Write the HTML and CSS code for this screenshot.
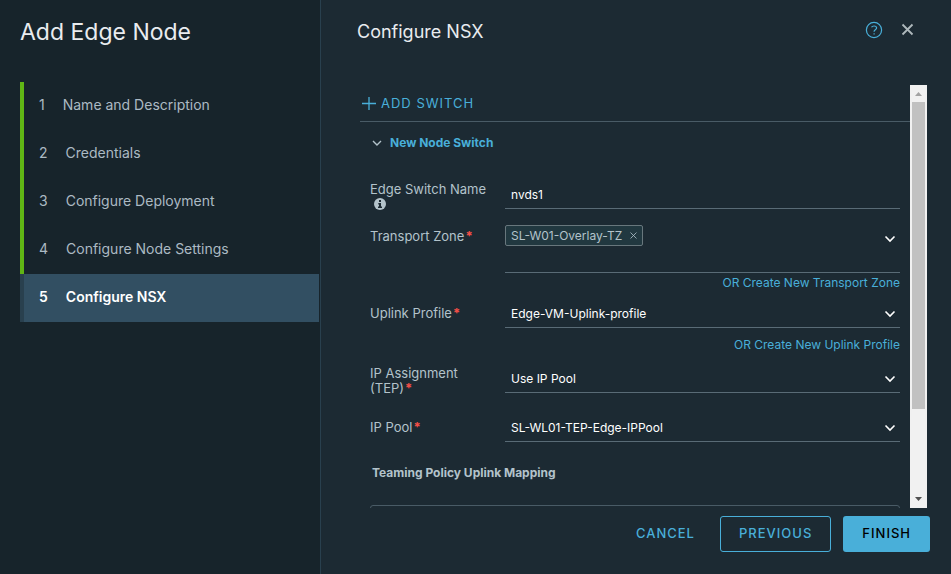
FILE: index.html
```html
<!DOCTYPE html>
<html lang="en">
<head>
    <meta charset="UTF-8">
    <meta name="viewport" content="width=device-width, initial-scale=1.0">
    <title>Add Edge Node</title>
    <link rel="stylesheet" href="styles.css">
</head>
<body>
    <div class="wizard">
        <aside class="sidebar">
            <h1 class="wizard-title">Add Edge Node</h1>
            <nav class="steps">
                <button type="button" class="step done"><span class="step-num">1</span>Name and Description</button>
                <button type="button" class="step done"><span class="step-num">2</span>Credentials</button>
                <button type="button" class="step done"><span class="step-num">3</span>Configure Deployment</button>
                <button type="button" class="step done"><span class="step-num">4</span>Configure Node Settings</button>
                <button type="button" class="step active" aria-current="step"><span class="step-num">5</span>Configure NSX</button>
            </nav>
        </aside>

        <main class="page">
            <header class="page-header">
                <h2 class="page-title">Configure NSX</h2>
                <button type="button" class="icon-button help" aria-label="Help">
                    <svg width="18" height="18" viewBox="0 0 18 18" fill="none" stroke="currentColor" stroke-width="1.2">
                        <circle cx="9" cy="9" r="7.6"/>
                        <path d="M6.5 6.3C7 5.4 7.9 5 9 5c1.5 0 2.6.8 2.6 2 0 1.7-2.5 1.7-2.5 3.5v.3"/>
                        <path d="M9.1 12.2v1.4"/>
                    </svg>
                </button>
                <button type="button" class="icon-button close" aria-label="Close">
                    <svg width="14" height="14" viewBox="0 0 14 14" fill="none" stroke="currentColor" stroke-width="1.8">
                        <path d="M1.5 1.5l10 10M11.5 1.5l-10 10"/>
                    </svg>
                </button>
            </header>

            <div class="scroll-area">
                <form class="content" id="nsxForm">
                    <div class="toolbar">
                        <button type="button" class="add-switch">
                            <svg width="14" height="14" viewBox="0 0 14 14" fill="none" stroke="currentColor" stroke-width="1.3">
                                <path d="M0 6.5h14M7 0v13"/>
                            </svg>
                            ADD SWITCH
                        </button>
                    </div>

                    <button type="button" class="switch-toggle" aria-expanded="true">
                        <svg width="10" height="6" viewBox="0 0 10 6" fill="none" stroke="#b3c3cb" stroke-width="1.4">
                            <path d="M1 1l4 4 4-4"/>
                        </svg>
                        New Node Switch
                    </button>

                    <div class="field tall">
                        <label class="label two-line" for="switchName">Edge Switch Name
                            <svg class="info" width="12" height="12" viewBox="0 0 12 12">
                                <circle cx="6" cy="6" r="6" fill="#b3c3cb"/>
                                <path d="M5 2h2v2H5zM4.3 5H7v3.5h1V10H4V8.5h1v-2h-.7z" fill="#1c2a33"/>
                            </svg>
                        </label>
                        <input class="control" id="switchName" type="text" value="nvds1">
                    </div>

                    <div class="field">
                        <label class="label" for="transportZone">Transport Zone<span class="required">*</span></label>
                        <div class="control multi">
                            <span class="chip">SL-W01-Overlay-TZ
                                <button type="button" class="chip-remove" aria-label="Remove SL-W01-Overlay-TZ">
                                    <svg width="7" height="7" viewBox="0 0 7 7" fill="none" stroke="currentColor" stroke-width=".8">
                                        <path d="M.5.5l6 6M6.5.5l-6 6"/>
                                    </svg>
                                </button>
                            </span>
                            <input class="multi-input" id="transportZone" type="text">
                            <button type="button" class="multi-open" aria-label="Show transport zones">
                                <svg width="12" height="8" viewBox="0 0 12 8" fill="none" stroke="#fff" stroke-width="1.6">
                                    <path d="M1.5 1.5L6 6l4.5-4.5"/>
                                </svg>
                            </button>
                        </div>
                    </div>
                    <a class="create-link" href="#">OR Create New Transport Zone</a>

                    <div class="field">
                        <label class="label" for="uplinkProfile">Uplink Profile<span class="required">*</span></label>
                        <div class="select-wrap">
                            <select class="control" id="uplinkProfile">
                                <option>Edge-VM-Uplink-profile</option>
                            </select>
                            <svg class="caret" width="12" height="8" viewBox="0 0 12 8" fill="none" stroke="#fff" stroke-width="1.6">
                                <path d="M1.5 1.5L6 6l4.5-4.5"/>
                            </svg>
                        </div>
                    </div>
                    <a class="create-link spaced" href="#">OR Create New Uplink Profile</a>

                    <div class="field assignment">
                        <label class="label two-line" for="ipAssignment">IP Assignment<br>(TEP)<span class="required">*</span></label>
                        <div class="select-wrap">
                            <select class="control" id="ipAssignment">
                                <option>Use IP Pool</option>
                            </select>
                            <svg class="caret" width="12" height="8" viewBox="0 0 12 8" fill="none" stroke="#fff" stroke-width="1.6">
                                <path d="M1.5 1.5L6 6l4.5-4.5"/>
                            </svg>
                        </div>
                    </div>

                    <div class="field last">
                        <label class="label" for="ipPool">IP Pool<span class="required">*</span></label>
                        <div class="select-wrap">
                            <select class="control" id="ipPool">
                                <option>SL-WL01-TEP-Edge-IPPool</option>
                            </select>
                            <svg class="caret" width="12" height="8" viewBox="0 0 12 8" fill="none" stroke="#fff" stroke-width="1.6">
                                <path d="M1.5 1.5L6 6l4.5-4.5"/>
                            </svg>
                        </div>
                    </div>

                    <h3 class="section-title">Teaming Policy Uplink Mapping</h3>
                    <div class="mapping-grid"></div>
                </form>

                <div class="scrollbar" aria-hidden="true">
                    <svg width="17" height="17" viewBox="0 0 17 17"><path d="M5 11l3.5-4 3.5 4z" fill="#a3a3a3"/></svg>
                    <div class="thumb"></div>
                    <svg width="17" height="17" viewBox="0 0 17 17"><path d="M5 6l3.5 4L12 6z" fill="#505050"/></svg>
                </div>
            </div>

            <footer class="page-footer">
                <button type="button" class="btn btn-link">CANCEL</button>
                <button type="button" class="btn btn-outline">PREVIOUS</button>
                <button type="submit" form="nsxForm" class="btn btn-primary">FINISH</button>
            </footer>
        </main>
    </div>
</body>
</html>
```

FILE: styles.css
```css
* {
    box-sizing: border-box;
}

body {
    margin: 0;
    background-color: #1c2a33;
    color: #b3c3cb;
    font-family: Inter, "Open Sans", sans-serif;
    font-size: 13px;
}

button,
input,
select {
    font-family: inherit;
    margin: 0;
    padding: 0;
    border: none;
    border-radius: 0;
    background: none;
    color: inherit;
}

button {
    cursor: pointer;
}

svg {
    display: block;
    flex-shrink: 0;
}

.wizard {
    display: flex;
    height: 100vh;
}

/* Left side */
.sidebar {
    flex: 0 0 321px;
    padding: 16px 1px 0 20px;
    background-color: #17242b;
    border-right: 1px solid #29404e;
}

.wizard-title {
    margin: 0 0 34px;
    font-size: 23px;
    font-weight: 400;
    line-height: 32px;
    color: #e9ecef;
}

.steps {
    display: flex;
    flex-direction: column;
}

.step {
    height: 48px;
    padding: 0 15px 4px;
    border-left: 4px solid transparent;
    text-align: left;
    font-size: 14px;
    color: #acbac3;
}

.step.done {
    border-left-color: #60b515;
}

.step.active {
    background-color: #324f62;
    border-left-color: #29404e;
    color: #fff;
    font-weight: 600;
}

.step-num {
    margin-right: 18px;
}

/* Right side */
.page {
    flex: 1;
    min-width: 0;
    display: flex;
    flex-direction: column;
}

.page-header {
    display: flex;
    align-items: center;
    padding: 16px 36px 0;
    margin-bottom: 37px;
}

.page-title {
    flex: 1;
    margin: 0;
    font-size: 18px;
    font-weight: 400;
    line-height: 32px;
    color: #e9ecef;
}

.icon-button {
    margin-left: 18px;
    margin-bottom: 4px;
}

.help {
    color: #49afd9;
}

.close {
    color: #aeb8bc;
}

.scroll-area {
    flex: 1;
    min-height: 0;
    display: flex;
    margin: 0 24px 0 39px;
    overflow: hidden;
}

.content {
    flex: 1;
    min-width: 0;
}

.toolbar {
    height: 37px;
    padding: 10px 2px 0;
    border-bottom: 1px solid #495b66;
}

.add-switch {
    display: flex;
    align-items: center;
    gap: 5px;
    font-size: 13px;
    line-height: 17px;
    letter-spacing: 1px;
    color: #49afd9;
}

.switch-toggle {
    display: flex;
    align-items: center;
    gap: 8px;
    padding: 11px 12px;
    margin-bottom: 17px;
    font-size: 12px;
    font-weight: 700;
    line-height: 20px;
    color: #49afd9;
}

.field {
    display: grid;
    grid-template-columns: 135px 1fr;
    align-items: start;
    margin: 0 10px;
}

.field.tall {
    margin-bottom: 13px;
}

.field.assignment {
    margin-bottom: 18px;
}

.field.last {
    margin-bottom: 21px;
}

.label {
    padding-top: 6px;
    line-height: 15px;
}

.label.two-line {
    padding-top: 1px;
}

.info {
    margin: 1px 0 0 4px;
}

.required {
    margin-left: 1px;
    color: #f54f47;
    font-weight: 700;
}

.control {
    width: 100%;
    height: 28px;
    padding: 0 6px;
    border-bottom: 1px solid #596b76;
    font-size: 12px;
    color: #fff;
}

.select-wrap {
    display: grid;
    align-items: center;
}

/* caret shares the select's grid cell */
.select-wrap .control,
.select-wrap .caret {
    grid-area: 1 / 1;
}

.select-wrap select {
    appearance: none;
}

.caret {
    justify-self: end;
    margin-right: 4px;
    pointer-events: none;
}

.multi {
    display: flex;
    align-items: flex-start;
    height: 50px;
    padding: 2px 4px 0 0;
}

.chip {
    display: flex;
    align-items: center;
    gap: 8px;
    height: 21px;
    padding: 0 5px;
    border: 1px solid #68777d;
    border-radius: 2px;
    background-color: #213840;
    font-size: 12px;
    white-space: nowrap;
    color: #b3c3cb;
}

.multi-input {
    flex: 1;
    min-width: 0;
    height: 21px;
}

.multi-open {
    padding-top: 10px;
}

.create-link {
    display: block;
    margin: 0 10px 7px;
    text-align: right;
    font-size: 12px;
    line-height: 20px;
    color: #49afd9;
    text-decoration: none;
}

.create-link.spaced {
    margin-top: 7px;
    margin-bottom: 10px;
}

.section-title {
    margin: 0 12px 22px;
    font-size: 12px;
    font-weight: 700;
    line-height: 20px;
}

.mapping-grid {
    height: 120px;
    margin: 0 10px;
    border: 1px solid #495b66;
    border-radius: 3px;
}

.scrollbar {
    display: flex;
    flex-direction: column;
    width: 17px;
    background-color: #f1f1f1;
}

.thumb {
    flex: 0 1 307px;
    width: 13px;
    margin: 0 auto auto;
    background-color: #c1c1c1;
}

/* Bottom buttons */
.page-footer {
    display: flex;
    justify-content: flex-end;
    gap: 12px;
    padding: 8px 21px 22px;
}

.btn {
    height: 36px;
    padding: 0 18px 3px;
    border: 1px solid transparent;
    border-radius: 3px;
    font-size: 13px;
    font-weight: 500;
    letter-spacing: 1px;
}

.btn-link {
    padding: 0 12px 3px;
    color: #49afd9;
}

.btn-outline {
    border-color: #49afd9;
    color: #49afd9;
}

.btn-primary {
    background-color: #49afd9;
    color: #000;
}
```
